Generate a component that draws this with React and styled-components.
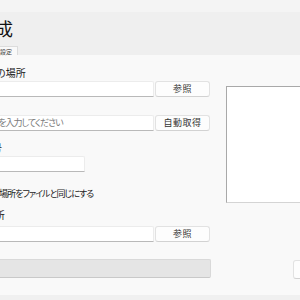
import React from "react";
import styled, { createGlobalStyle } from "styled-components";

const Global = createGlobalStyle`
  html, body { margin: 0; padding: 0; }
  body {
    width: 300px; height: 300px; overflow: hidden;
    background: #f9f9f9;
    font-family: "Noto Sans CJK JP", "Noto Sans", sans-serif;
    font-feature-settings: "palt";
    color: #1b1b1b;
  }
`;

const Window = styled.div`
  width: 300px; height: 300px; display: flex; flex-direction: column; overflow: hidden;
`;

const TopStrip = styled.div`
  height: 12px; background: #f4f4f4; flex: none;
`;

const Header = styled.div`
  height: 43px; background: #efefef; flex: none;
  display: flex; flex-direction: column; justify-content: space-between;
  margin-left: -34px;
`;

const Title = styled.h1`
  margin: 4px 0 0 11px; font-size: 18px; font-weight: 400; line-height: 24px;
  color: #111;
`;

const Tabs = styled.div`
  display: flex; padding-left: 16px;
`;

const Tab = styled.div`
  height: 9px; padding: 0 5px 0 5px; font-size: 6px; line-height: 9px;
  background: #f9f9f9; border: 1px solid #dcdcdc; border-bottom: none;
  color: #444; box-sizing: border-box;
`;

const Main = styled.div`
  flex: 1; display: grid; grid-template-columns: 244px 1fr; column-gap: 16px;
  margin-left: -34px;
`;

const LeftCol = styled.div`
  display: flex; flex-direction: column; padding-top: 11px;
`;

const RightCol = styled.div`
  display: flex; flex-direction: column; align-items: flex-start;
`;

const Label = styled.div`
  font-size: 10px; line-height: 14px; margin-top: ${p => p.$mt || 0}px; color: #1b1b1b;
  white-space: nowrap;
`;

const Row = styled.div`
  display: flex; gap: 1px; margin-top: ${p => p.$mt || 1}px; height: 16px;
`;

const Input = styled.div`
  box-sizing: border-box; height: 16px; width: ${p => p.$w}px;
  background: #fff; border: 1px solid #ececec; border-bottom: 1px solid #b9b9b9;
  border-radius: 2px 2px 0 0;
  font-size: 9px; line-height: 14px; padding-left: 4px; color: #7a7a7a;
  letter-spacing: -1px;
  white-space: nowrap; overflow: hidden;
`;

const Button = styled.div`
  box-sizing: border-box; height: 16px; width: 55px;
  background: #fdfdfd; border: 1px solid #e2e2e2; border-bottom-color: #d2d2d2;
  border-radius: 3px; font-size: 9px; line-height: 14px; text-align: center;
  color: #333; letter-spacing: 0.5px;
`;

const CheckRow = styled.label`
  display: flex; align-items: center; gap: 5px; margin-top: 14px; height: 14px;
  font-size: 9px; letter-spacing: -1px; white-space: nowrap;
`;

const Check = styled.span`
  width: 12px; height: 12px; box-sizing: border-box; border: 1px solid #888;
  border-radius: 2px; background: #fff; flex: none;
`;

const Progress = styled.div`
  box-sizing: border-box; height: 19px; margin-top: 17px; width: 245px;
  background: #e5e5e5; border: 1px solid #d9d9d9; border-bottom-color: #c9c9c9;
  border-radius: 2px;
`;

const Preview = styled.div`
  box-sizing: border-box; width: 90px; height: 117px; margin-top: 31px;
  background: #fff; border: 1px solid #d4d4d4; border-top-color: #a9a9a9; border-left-color: #a9a9a9;
`;

const SideButton = styled(Button)`
  height: 19px; width: 60px; margin-top: 57px; margin-left: 67px;
`;

const Footer = styled.div`
  height: 5px; background: #f0f0f0; flex: none;
`;

export default function App() {
  return (
    <>
      <Global />
      <Window>
        <TopStrip />
        <Header>
          <Title>作成</Title>
          <Tabs><Tab>基本設定</Tab></Tabs>
        </Header>
        <Main>
          <LeftCol>
            <Label>保存先の場所</Label>
            <Row>
              <Input $w={188} />
              <Button>参照</Button>
            </Row>
            <Label $mt={2}>URL</Label>
            <Row $mt={2}>
              <Input $w={188}>タイトルを入力してください</Input>
              <Button>自動取得</Button>
            </Row>
            <Label $mt={10}>No.番号</Label>
            <Row $mt={0}>
              <Input $w={119} />
            </Row>
            <CheckRow><Check />保存場所をファイルと同じにする</CheckRow>
            <Label $mt={8}>置き場所</Label>
            <Row $mt={4}>
              <Input $w={188} />
              <Button>参照</Button>
            </Row>
            <Progress />
          </LeftCol>
          <RightCol>
            <Preview />
            <SideButton>作成</SideButton>
          </RightCol>
        </Main>
        <Footer />
      </Window>
    </>
  );
}
